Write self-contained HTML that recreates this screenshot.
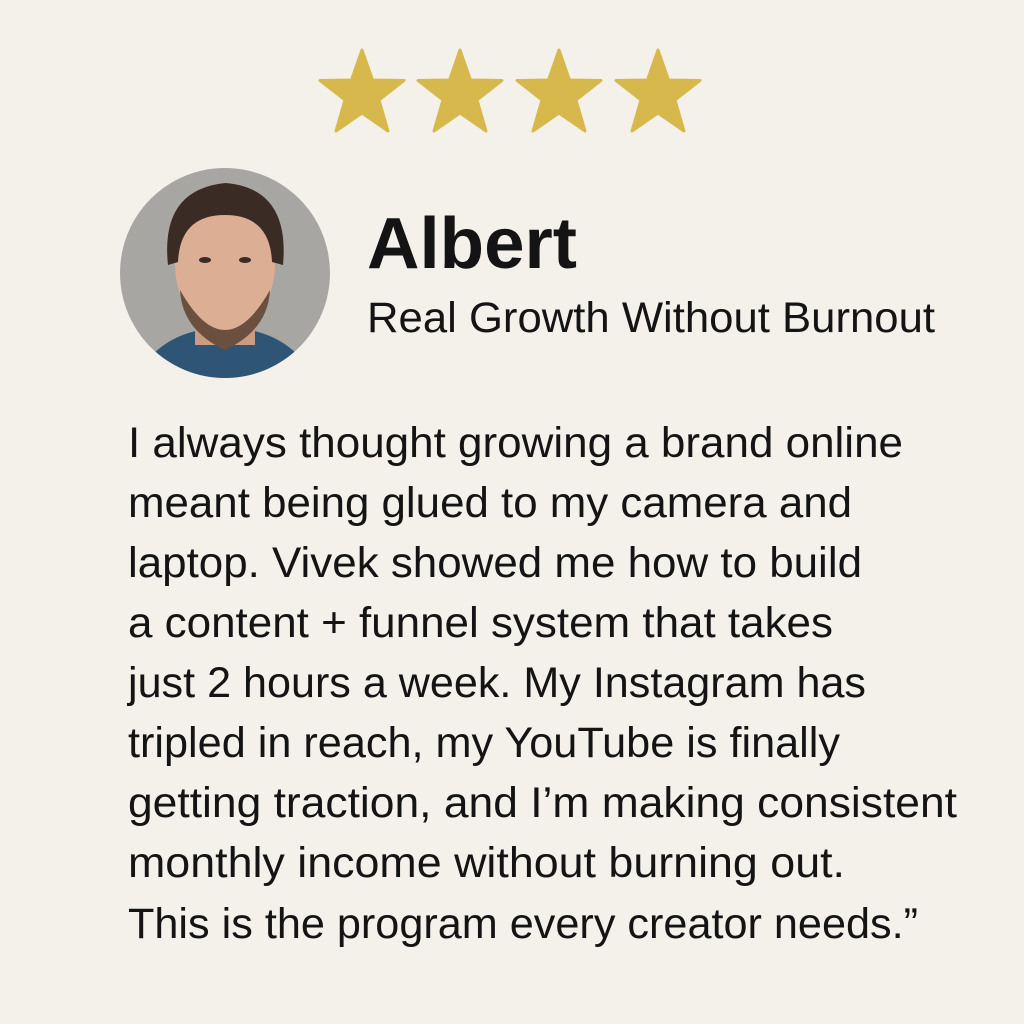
<!DOCTYPE html>
<html><head><meta charset="utf-8"><style>
html,body{margin:0;padding:0;background:#f4f1ea;}
svg{display:block}
</style></head><body>
<svg width="1024" height="1024" viewBox="0 0 1024 1024" xmlns="http://www.w3.org/2000/svg">
<rect width="1024" height="1024" fill="#f4f1ea"/>
<defs>
<polygon id="st" points="0,-44 10.5,-14 42,-13.5 17,6 26,37 0,19 -26,37 -17,6 -42,-13.5 -10.5,-14" stroke="#d7b84c" stroke-width="3" stroke-linejoin="round" fill="#d7b84c"/>
<clipPath id="c"><circle cx="225" cy="273" r="105"/></clipPath>
</defs>
<use href="#st" x="362" y="94"/>
<use href="#st" x="460" y="94"/>
<use href="#st" x="559" y="94"/>
<use href="#st" x="658" y="94"/>
<g clip-path="url(#c)">
<rect x="110" y="160" width="230" height="230" fill="#a8a6a2"/>
<path d="M130 390 Q150 340 200 330 L250 330 Q300 340 320 390 Z" fill="#2f5576"/>
<rect x="195" y="300" width="60" height="45" fill="#c99d84"/>
<ellipse cx="225" cy="265" rx="50" ry="65" fill="#dcae93"/>
<path d="M180 290 Q225 370 270 290 Q268 330 225 350 Q182 330 180 290Z" fill="#6b5040"/>
<path d="M168 265 Q160 190 225 183 Q290 188 283 265 L272 262 Q270 215 225 215 Q180 215 178 262Z" fill="#3a2c24"/>
<ellipse cx="205" cy="260" rx="6" ry="3" fill="#3a2c24"/>
<ellipse cx="245" cy="260" rx="6" ry="3" fill="#3a2c24"/>
</g>
<g font-family="'Liberation Sans', sans-serif" fill="#141414">
<text x="367" y="268" font-size="72" font-weight="bold" textLength="210" lengthAdjust="spacingAndGlyphs">Albert</text>
<text x="367" y="332" font-size="43" textLength="568" lengthAdjust="spacingAndGlyphs">Real Growth Without Burnout</text>
<g font-size="43">
<text x="128" y="457" textLength="775" lengthAdjust="spacingAndGlyphs">I always thought growing a brand online</text>
<text x="128" y="517" textLength="724" lengthAdjust="spacingAndGlyphs">meant being glued to my camera and</text>
<text x="128" y="577" textLength="734" lengthAdjust="spacingAndGlyphs">laptop. Vivek showed me how to build</text>
<text x="128" y="637" textLength="705" lengthAdjust="spacingAndGlyphs">a content + funnel system that takes</text>
<text x="128" y="697" textLength="738" lengthAdjust="spacingAndGlyphs">just 2 hours a week. My Instagram has</text>
<text x="128" y="757" textLength="712" lengthAdjust="spacingAndGlyphs">tripled in reach, my YouTube is finally</text>
<text x="128" y="817" textLength="829" lengthAdjust="spacingAndGlyphs">getting traction, and I’m making consistent</text>
<text x="128" y="877" textLength="717" lengthAdjust="spacingAndGlyphs">monthly income without burning out.</text>
<text x="128" y="938" textLength="790" lengthAdjust="spacingAndGlyphs">This is the program every creator needs.”</text>
</g>
</g>
</svg>
</body></html>
